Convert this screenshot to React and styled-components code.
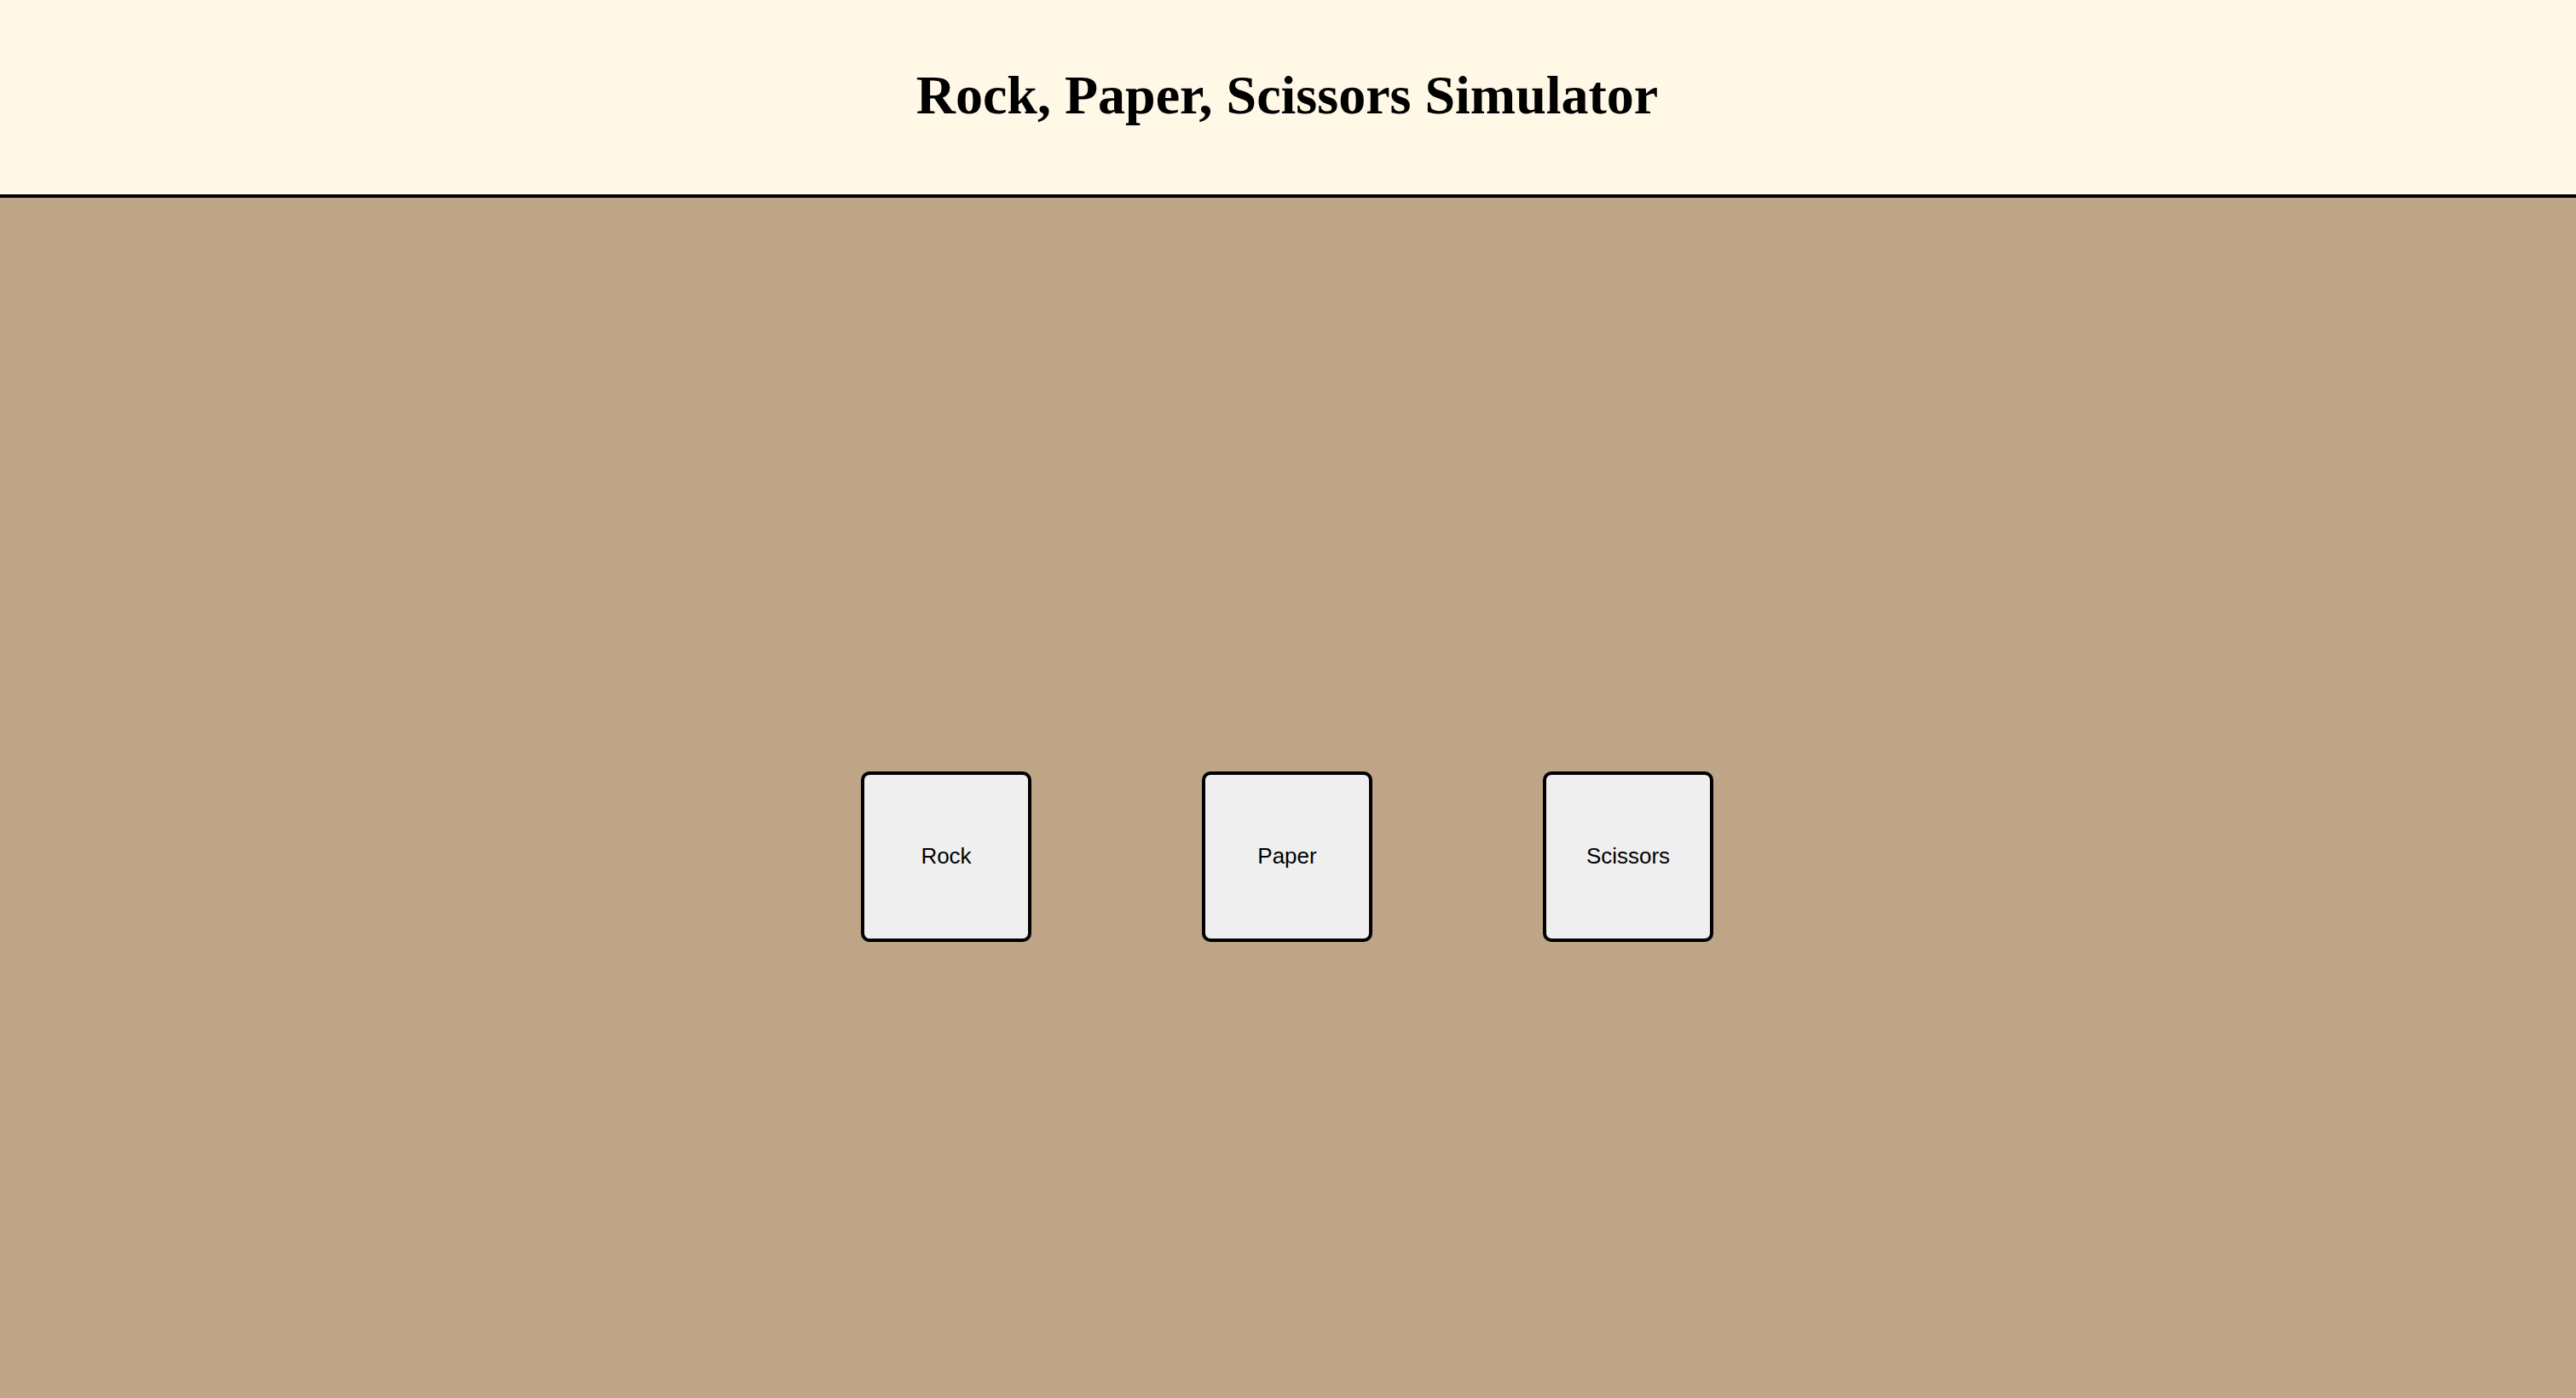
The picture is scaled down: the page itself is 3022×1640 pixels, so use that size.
import React from "react";
import styled, { createGlobalStyle } from "styled-components";

const GlobalStyle = createGlobalStyle`
  html, body {
    margin: 0;
    padding: 0;
    background: #bfa587;
  }
  * {
    box-sizing: border-box;
  }
`;

const choices = ["Rock", "Paper", "Scissors"];

const App = () => {
  return (
    <Page>
      <GlobalStyle />
      <Header>
        <h1>Rock, Paper, Scissors Simulator</h1>
      </Header>
      <Arena>
        {choices.map((c) => (
          <ChoiceButton key={c}>{c}</ChoiceButton>
        ))}
      </Arena>
    </Page>
  );
};

export default App;

let Page = styled.div`
  min-height: 100vh;
  display: flex;
  flex-direction: column;
`;

let Header = styled.header`
  background: #fff8e7;
  height: 232px;
  padding-top: 75px;
  padding-right: 2px;
  border-bottom: 4px solid #000;
  text-align: center;

  h1 {
    margin: 0;
    font-family: "Liberation Serif", "Times New Roman", serif;
    font-weight: 700;
    font-size: 64px;
    color: #000;
  }
`;

let Arena = styled.main`
  flex: 1;
  background: #bfa587;
  display: flex;
  justify-content: center;
  align-items: flex-start;
  gap: 200px;
  padding-top: 673px;
  padding-right: 2px;
`;

let ChoiceButton = styled.button`
  width: 200px;
  height: 200px;
  background: #efefef;
  border: 4px solid #000;
  border-radius: 10px;
  font-family: "Liberation Sans", Arial, sans-serif;
  font-size: 26px;
  color: #000;
  cursor: pointer;
  padding: 0 0 2px;
`;
